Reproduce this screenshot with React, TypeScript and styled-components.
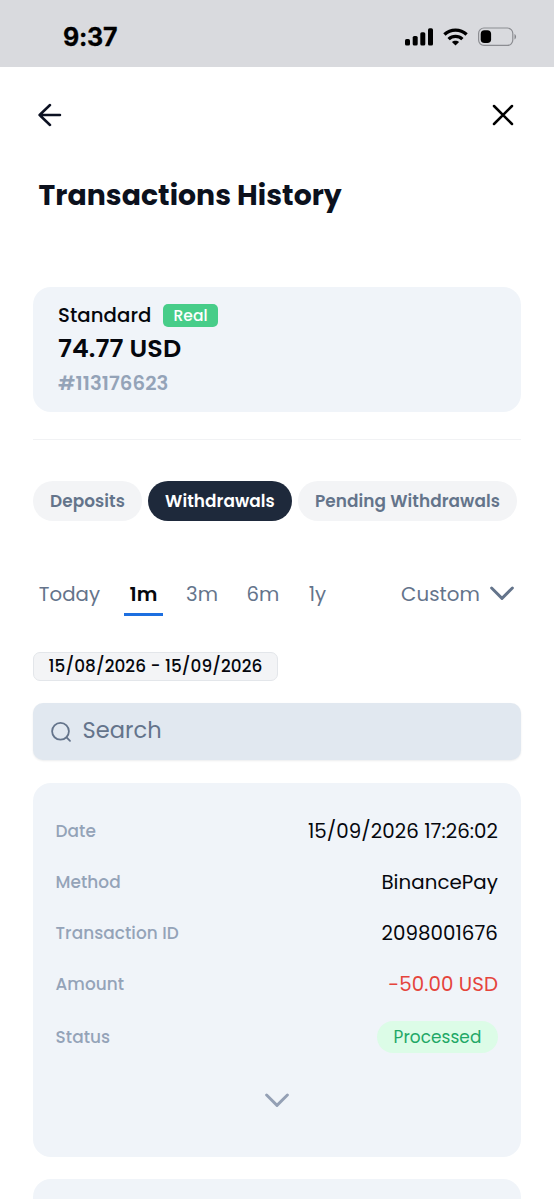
import React from 'react';
import styled, { createGlobalStyle } from 'styled-components';

const GlobalStyle = createGlobalStyle`
  * { box-sizing: border-box; }
  html, body { margin: 0; background: #fff; }
  body { font-family: Poppins, Inter, sans-serif; color: #05070d; overflow: hidden; }
  button { font: inherit; border: 0; padding: 0; background: none; color: inherit; }
  svg { display: block; flex: none; }
`;

const Screen = styled.div`
  width: 554px;
  height: 1199px;
  overflow: hidden;
  display: flex;
  flex-direction: column;
`;

const Text = styled.span<{ $size: number; $weight?: number; $color?: string }>`
  font-size: ${(p) => p.$size}px;
  font-weight: ${(p) => p.$weight ?? 400};
  letter-spacing: 0.07px;
  color: ${(p) => p.$color ?? 'inherit'};
  white-space: nowrap;
`;

const StatusBar = styled.header`
  height: 67px;
  flex: none;
  background: #d9dade;
  display: flex;
  align-items: center;
  justify-content: space-between;
  padding: 7px 37px 0 63px;
  color: #000;
`;

const Clock = styled.time`
  font: 700 25px Inter, sans-serif;
  letter-spacing: -0.24px;
  -webkit-text-stroke: 0.3px #000;
`;

const StatusIcons = styled.div`
  display: flex;
  align-items: center;
  gap: 10px;
`;

const NavBar = styled.nav`
  display: flex;
  align-items: center;
  justify-content: space-between;
  height: 96px;
  flex: none;
  padding: 0 40px 0 38px;
`;

const Title = styled.h1`
  margin: 0 0 0 38.5px;
  height: 64px;
  line-height: 65px;
  font-size: 28.3px;
  font-weight: 700;
  letter-spacing: 0.05px;
  color: #0c111d;
`;

const Content = styled.main`
  padding: 60px 33px 0;
  display: flex;
  flex-direction: column;
`;

const AccountCard = styled.section`
  height: 124.5px;
  border-radius: 18px;
  background: #f0f4f9;
  padding: 13px 25px 0;
  display: flex;
  flex-direction: column;
`;

const AccountLine = styled.div<{ $height: number }>`
  height: ${(p) => p.$height}px;
  display: flex;
  align-items: center;
  gap: 11.5px;
`;

const RealBadge = styled.span`
  width: 55px;
  height: 23px;
  margin-top: 1px;
  border-radius: 5px;
  background: #47cd89;
  color: #fff;
  display: flex;
  align-items: center;
  justify-content: center;
`;

const Divider = styled.hr`
  width: 100%;
  height: 1px;
  margin: 27.5px 0 41px;
  border: 0;
  background: #f1f2f4;
`;

const Pills = styled.div`
  display: flex;
  gap: 6px;
`;

const Pill = styled.button<{ $width: number; $active?: boolean }>`
  width: ${(p) => p.$width}px;
  height: 40px;
  border-radius: 20px;
  background: ${(p) => (p.$active ? '#1e293b' : '#f3f4f6')};
  color: ${(p) => (p.$active ? '#fff' : '#64748b')};
  display: flex;
  align-items: center;
  justify-content: center;
`;

const Periods = styled.div`
  display: flex;
  height: 45px;
  margin-top: 50px;
  padding-right: 7px;
  color: #64748b;
`;

const Period = styled.button<{ $width: number; $active?: boolean; $gap?: number }>`
  width: ${(p) => p.$width}px;
  height: 45px;
  margin-left: ${(p) => p.$gap ?? 0}px;
  line-height: 46px;
  display: flex;
  justify-content: center;
  color: ${(p) => (p.$active ? '#05070d' : '#64748b')};
  box-shadow: ${(p) => (p.$active ? 'inset 0 -3px #1d6fe0' : 'none')};
`;

const CustomPeriod = styled.button`
  height: 45px;
  margin-left: auto;
  display: flex;
  align-items: center;
  gap: 10px;
  color: #64748b;
`;

const RangeChip = styled.div`
  width: 245px;
  height: 28.5px;
  margin-top: 36px;
  border: 1px solid #e3e6ea;
  border-radius: 7px;
  background: #f3f4f6;
  display: flex;
  align-items: center;
  justify-content: center;
`;

const SearchBox = styled.div`
  height: 57px;
  margin-top: 22.5px;
  border-radius: 10px;
  background: #e1e8f0;
  box-shadow: 0 1px 2px rgba(16, 24, 40, 0.08);
  display: flex;
  align-items: center;
  gap: 10.5px;
  padding: 0 18px 3px;
  color: #64748b;

  svg { margin-top: 5px; }
`;

const TransactionCard = styled.section`
  height: 373.5px;
  flex: none;
  margin-top: 23px;
  padding: 22.3px 23px 0 22.5px;
  border-radius: 18px;
  background: #f0f4f9;
  display: flex;
  flex-direction: column;
`;

const DetailRow = styled.div<{ $height?: number }>`
  height: ${(p) => p.$height ?? 51.2}px;
  display: flex;
  align-items: center;
  justify-content: space-between;
`;

const StatusBadge = styled.span`
  width: 121px;
  height: 32px;
  border-radius: 16px;
  background: #dcfce7;
  display: flex;
  align-items: center;
  justify-content: center;
`;

const ExpandButton = styled.button`
  margin-top: 28.6px;
  display: flex;
  justify-content: center;
`;

const NextCard = styled(TransactionCard)`
  margin-top: 22.5px;
`;

const SignalIcon = () => (
  <svg width="28" height="18" viewBox="0 0 28 18" fill="#000">
    <rect x="0" y="11" width="5" height="6.6" rx="1.6" />
    <rect x="7.7" y="8" width="5" height="9.6" rx="1.6" />
    <rect x="15.3" y="4.2" width="5" height="13.4" rx="1.6" />
    <rect x="23" y="0.2" width="5" height="17.4" rx="1.6" />
  </svg>
);

const WifiIcon = () => (
  <svg width="25" height="18" viewBox="0 0 25 18" fill="none" stroke="#000" strokeWidth="3.3">
    <path d="M1.4 6.5C7.6 .6 17.4 .6 23.6 6.5" />
    <path d="M5.6 11.1c3.9-3.7 9.9-3.7 13.8 0" />
    <path d="M8.9 14.1c2-1.9 5.2-1.9 7.2 0l-3.6 3.5z" fill="#000" stroke="none" />
  </svg>
);

const BatteryIcon = () => (
  <svg width="39" height="20" viewBox="0 0 39 20">
    <rect x="0.6" y="1" width="34.2" height="17.4" rx="5.4" fill="none" stroke="#8c8d92" strokeWidth="1.2" />
    <rect x="2.7" y="3.3" width="10.4" height="12.8" rx="3.8" fill="#000" />
    <path d="M36.5 7c2.1 1 2.1 4.5 0 5.5z" fill="#85868b" />
  </svg>
);

const BackIcon = () => (
  <svg width="24" height="24" viewBox="0 0 24 24" fill="none" stroke="#0c1122" strokeWidth="2.5" strokeLinecap="round" strokeLinejoin="round">
    <path d="M22 12H1.6M12 2 1.6 12 12 22" />
  </svg>
);

const CloseIcon = () => (
  <svg width="22" height="22" viewBox="0 0 22 22" fill="none" stroke="#000" strokeWidth="2.5" strokeLinecap="round">
    <path d="m2 2 18 18M20 2 2 20" />
  </svg>
);

const ChevronIcon = ({ color }: { color: string }) => (
  <svg width="24" height="15" viewBox="0 0 24 15" fill="none" stroke={color} strokeWidth="2.9" strokeLinecap="round" strokeLinejoin="round">
    <path d="M1.6 2 12 12.4 22.4 2" />
  </svg>
);

const SearchIcon = () => (
  <svg width="21" height="21" viewBox="0 0 21 21" fill="none" stroke="#64748b" strokeWidth="1.8" strokeLinecap="round">
    <circle cx="9.5" cy="9.3" r="8.4" />
    <path d="m15.8 15.6 3.2 3.2" />
  </svg>
);

const LABEL = '#94a3b8';

const details = [
  { label: 'Date', value: '15/09/2026 17:26:02' },
  { label: 'Method', value: 'BinancePay' },
  { label: 'Transaction ID', value: '2098001676' },
  { label: 'Amount', value: '-50.00 USD', color: '#e5443c' },
];

export default function App() {
  return (
    <Screen>
      <GlobalStyle />
      <StatusBar>
        <Clock>9:37</Clock>
        <StatusIcons>
          <SignalIcon />
          <WifiIcon />
          <BatteryIcon />
        </StatusIcons>
      </StatusBar>
      <NavBar>
        <button aria-label="Back"><BackIcon /></button>
        <button aria-label="Close"><CloseIcon /></button>
      </NavBar>
      <Title>Transactions History</Title>
      <Content>
        <AccountCard>
          <AccountLine $height={30}>
            <Text $size={19.7} $weight={500}>Standard</Text>
            <RealBadge><Text $size={15.5} $weight={500}>Real</Text></RealBadge>
          </AccountLine>
          <AccountLine $height={37.5}>
            <Text $size={25.4} $weight={600}>74.77 USD</Text>
          </AccountLine>
          <AccountLine $height={31}>
            <Text $size={19.7} $weight={600} $color={LABEL}>#113176623</Text>
          </AccountLine>
        </AccountCard>
        <Divider />
        <Pills>
          <Pill $width={109}><Text $size={16.9} $weight={600}>Deposits</Text></Pill>
          <Pill $width={144} $active><Text $size={16.9} $weight={600}>Withdrawals</Text></Pill>
          <Pill $width={219}><Text $size={16.9} $weight={600}>Pending Withdrawals</Text></Pill>
        </Pills>
        <Periods>
          <Period $width={73}><Text $size={19.7}>Today</Text></Period>
          <Period $width={39} $gap={18} $active><Text $size={19.7} $weight={600}>1m</Text></Period>
          <Period $width={78}><Text $size={19.7}>3m</Text></Period>
          <Period $width={44}><Text $size={19.7}>6m</Text></Period>
          <Period $width={65}><Text $size={19.7}>1y</Text></Period>
          <CustomPeriod>
            <Text $size={19.8}>Custom</Text>
            <ChevronIcon color="#64748b" />
          </CustomPeriod>
        </Periods>
        <RangeChip>
          <Text $size={16.9} $weight={500}>15/08/2026 - 15/09/2026</Text>
        </RangeChip>
        <SearchBox>
          <SearchIcon />
          <Text $size={22.5}>Search</Text>
        </SearchBox>
        <TransactionCard>
          {details.map((d) => (
            <DetailRow key={d.label}>
              <Text $size={16.9} $weight={500} $color={LABEL}>{d.label}</Text>
              <Text $size={19.8} $color={d.color}>{d.value}</Text>
            </DetailRow>
          ))}
          <DetailRow $height={54}>
            <Text $size={16.9} $weight={500} $color={LABEL}>Status</Text>
            <StatusBadge><Text $size={16.9} $color="#1fa866">Processed</Text></StatusBadge>
          </DetailRow>
          <ExpandButton aria-label="Show more"><ChevronIcon color="#94a0b5" /></ExpandButton>
        </TransactionCard>
        <NextCard />
      </Content>
    </Screen>
  );
}
